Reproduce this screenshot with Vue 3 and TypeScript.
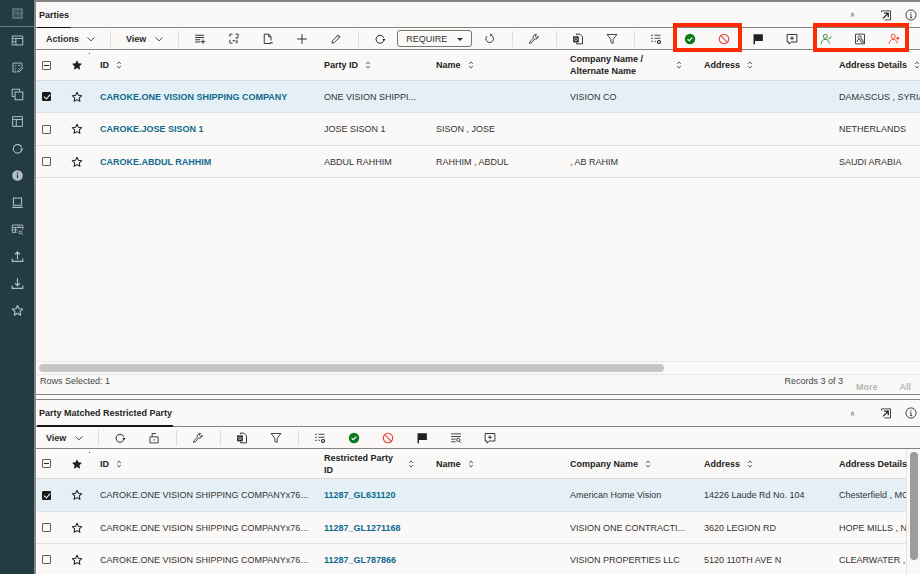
<script setup lang="ts">
type Cell = { text?: string; link?: boolean }
type Row = { selected: boolean; cells: Cell[] }
type Head = { label: string; sort?: boolean; wrap?: boolean }
type ToolItem = { icon?: string; sep?: boolean; require?: boolean }

const icons: Record<string, string> = {
  logo: '<rect x="1.5" y="1.5" width="13" height="13" fill="currentColor" opacity=".45"/><path d="M4 4h3v3H4zM9 4h3v1.5H9zM9 7h3M4 9h1.5v3H4zM7 9h1.5v3H7zM10 9h2v3h-2z" fill="none" stroke="#233c43" stroke-width=".9"/>',
  panels: '<path d="M1.5 2.5h13v11h-13zM1.5 5.5h13M6 5.5v8M1.5 9.5H6" fill="none" stroke="currentColor" stroke-width="1.2"/>',
  editdoc: '<path d="M13.5 7V2.5h-11v11H7M5 5.5h1.5M8.500 5.5H11M5 8.500h1.500M5 11h1M8.500 13.500l.4-2L13 7.500l1.500 1.500-4 4z" fill="none" stroke="currentColor" stroke-width="1.200"/>',
  copy: '<path d="M10.500 4V1.500h-9v9H4M5 5h9.500v9.500H5z" fill="none" stroke="currentColor" stroke-width="1.300"/>',
  layout: '<path d="M2 2h12v12H2zM2 5.500h12M6.500 5.500V14" fill="none" stroke="currentColor" stroke-width="1.200"/>',
  sync: '<path d="M13 6.500A5.300 5.300 0 1 0 13.300 9" fill="none" stroke="currentColor" stroke-width="1.300"/><path d="M11 8h4.500l-2.200 2.500z" fill="currentColor"/>',
  infofill: '<circle cx="8" cy="8" r="6.500" fill="currentColor"/><path d="M8 7v4.500M8 4.300v1.400" stroke="#233c43" stroke-width="1.600"/>',
  laptop: '<path d="M3 2.500h10v9H3zM1.500 14h13" fill="none" stroke="currentColor" stroke-width="1.300"/>',
  tablesearch: '<path d="M7 11.500H1.500v-9h13V8M1.500 5.500h13M1.500 8.500H8M5.500 5.500v6M10 2.500v3" fill="none" stroke="currentColor" stroke-width="1.100"/><circle cx="11.500" cy="11.500" r="1.800" fill="none" stroke="currentColor" stroke-width="1.100"/><path d="M13 13l1.500 1.500" stroke="currentColor" stroke-width="1.100"/>',
  upload: '<path d="M1.500 10.500v3.500h13v-3.500M8 11.500V2.500M4.800 5.500L8 2.300l3.200 3.200" fill="none" stroke="currentColor" stroke-width="1.400"/>',
  download: '<path d="M1.500 10.500v3.500h13v-3.500M8 1.500v9M4.800 7.500L8 10.700l3.200-3.200" fill="none" stroke="currentColor" stroke-width="1.400"/>',
  star: '<path d="M8 1.800l1.900 4 4.400.5-3.200 3 .8 4.400L8 11.500l-3.900 2.200.8-4.400-3.200-3 4.400-.5z" fill="none" stroke="currentColor" stroke-width="1.400" stroke-linejoin="round"/>',
  addrow: '<path d="M1.500 3h12M1.500 6h12M1.500 9h7M1.500 12h7" fill="none" stroke="currentColor" stroke-width="1.200"/><path d="M12 8.500v6M9 11.500h6" stroke="currentColor" stroke-width="1.200"/>',
  swap: '<path d="M6 1.500H2.500V5M10 1.500h3.500V5M2.500 9v4.500H6M10 6.500h3.500M13.500 6.500L12 5M10 10.500H6.500M6.500 10.500L8 9M12 9v4.500M12 13.500L10.500 12" fill="none" stroke="currentColor" stroke-width="1.200"/>',
  doc: '<path d="M12 14H3V1.500h6L12 5v5M9 1.500V5h3M10.500 13h4" fill="none" stroke="currentColor" stroke-width="1.200"/>',
  plus: '<path d="M8 1.500v13M1.500 8h13" stroke="currentColor" stroke-width="1.200"/>',
  pencil: '<path d="M2.500 13.500l.7-3L11 2.500l2.500 2.500-7.800 7.800z M9.800 3.800l2.400 2.400" fill="none" stroke="currentColor" stroke-width="1.100"/>',
  reload: '<path d="M10 3.300A5 5 0 1 1 4 4.200" fill="none" stroke="currentColor" stroke-width="1.200"/><path d="M8.500 .8v4l2.800-2z" fill="currentColor"/>',
  wrench: '<path d="M2 14l1-3 4.200-4.200A3.600 3.600 0 0 1 11.500 2L9.700 4l1.800 2 2.200-1.600a3.600 3.600 0 0 1-4.800 3.600L4.500 13z" fill="none" stroke="currentColor" stroke-width="1.100"/>',
  exportdoc: '<path d="M6 3V1.500h4.500L14 5v9.500H6V13" fill="none" stroke="currentColor" stroke-width="1.200"/><rect x="1.500" y="4.500" width="7.500" height="8" fill="currentColor"/><circle cx="5.200" cy="8.500" r="1.800" fill="none" stroke="#fbf9f8" stroke-width="1"/>',
  filter: '<path d="M1.500 2h13L9.500 8.500V14l-3-1.500v-4z" fill="none" stroke="currentColor" stroke-width="1.100"/>',
  listgear: '<path d="M1.500 3l1 1 1-1.800M1.500 7l1 1 1-1.800M1.500 11l1 1 1-1.800M6 3h8M6 7h8M6 11h2" fill="none" stroke="currentColor" stroke-width="1.100"/><circle cx="12" cy="12" r="2" fill="none" stroke="currentColor" stroke-width="1.500"/>',
  okfill: '<circle cx="8" cy="8" r="7" fill="#0b7a1d"/><path d="M4.800 8.300l2.200 2 4-4.200" fill="none" stroke="#fff" stroke-width="1.500"/>',
  ban: '<circle cx="8" cy="8" r="6.300" fill="none" stroke="#ee3a2c" stroke-width="1.400"/><path d="M3.600 3.600l8.800 8.800" stroke="#ee3a2c" stroke-width="1.400"/>',
  flag: '<path d="M2 1.500h12.500v9H4V15H2z" fill="currentColor"/>',
  comment: '<path d="M1.500 2h13v10H7l-3 2.800V12H1.500z M8 4.500v5M5.500 7h5" fill="none" stroke="currentColor" stroke-width="1.200"/>',
  userok: '<circle cx="7" cy="4.500" r="2.700" fill="none" stroke="#17852c" stroke-width="1.200"/><path d="M1.500 14.500c.3-4 2.300-6 5.500-6s5 1.700 5.500 5.500M11 6.500l1.500 1.500L15 4.500" fill="none" stroke="#17852c" stroke-width="1.200"/>',
  docsearch: '<path d="M2 1.500h12v13H2z" fill="none" stroke="currentColor" stroke-width="1.100"/><circle cx="7.500" cy="6" r="2.200" fill="none" stroke="currentColor" stroke-width="1.100"/><path d="M4 12c.3-2.500 1.500-3.500 3.500-3.500" fill="none" stroke="currentColor" stroke-width="1.100"/><circle cx="10.500" cy="10.500" r="1.700" fill="none" stroke="currentColor" stroke-width="1.100"/><path d="M12 12l2 2" stroke="currentColor" stroke-width="1.100"/>',
  userx: '<circle cx="7" cy="4.500" r="2.700" fill="none" stroke="#ee3a2c" stroke-width="1.200"/><path d="M1.500 14.500c.3-4 2.300-6 5.500-6s5 1.700 5.500 5.500" fill="none" stroke="#ee3a2c" stroke-width="1.200"/><circle cx="13" cy="7" r="1.800" fill="#ee3a2c"/>',
  listsearch: '<path d="M1.500 2.500h13M1.500 6h13M1.500 9.500h6M1.500 13h6" fill="none" stroke="currentColor" stroke-width="1.100"/><circle cx="11" cy="10.500" r="2.200" fill="none" stroke="currentColor" stroke-width="1.100"/><path d="M12.700 12.200l2 2" stroke="currentColor" stroke-width="1.100"/>',
  lockdoc: '<path d="M2.500 6.500h11v8h-11zM5.500 6.500V2h5M8 9.500v2" fill="none" stroke="currentColor" stroke-width="1.100"/>',
  collapse: '<path d="M5 8l3-2.500L11 8M5 11.500L8 9l3 2.500" fill="none" stroke="currentColor" stroke-width="1.200"/>',
  openout: '<path d="M6 2.500H2v2M14 2.500v12H6M6 2.500h8" fill="none" stroke="currentColor" stroke-width="1.100"/><path d="M4 12.500l7-7M5.500 5.500H11V11" fill="none" stroke="currentColor" stroke-width="1.700"/>',
  info: '<circle cx="8" cy="8" r="6.800" fill="none" stroke="currentColor" stroke-width="1.100"/><path d="M8 7v4.500M6.800 7H8M6.500 11.500h3M8 4.200v1.300" fill="none" stroke="currentColor" stroke-width="1.100"/>',
  chevron: '<path d="M2.500 5.500L8 11l5.500-5.500" fill="none" stroke="currentColor" stroke-width="1.400"/>',
  sort: '<path d="M5 6.500L8 3l3 3.500M5 9.500L8 13l3-3.500" fill="none" stroke="currentColor" stroke-width="1.200"/>',
  starfill: '<path d="M8 1.500l2 4.300 4.700.6-3.400 3.200.9 4.700L8 11.900l-4.200 2.400.9-4.700L1.300 6.400 6 5.800z" fill="currentColor"/>',
}

const sideIcons = ['panels', 'editdoc', 'copy', 'layout', 'sync', 'infofill', 'laptop', 'tablesearch', 'upload', 'download', 'star']

const topTools: ToolItem[] = [
  { icon: 'addrow' }, { icon: 'swap' }, { icon: 'doc' }, { icon: 'plus' }, { icon: 'pencil' }, { sep: true },
  { icon: 'sync' }, { require: true }, { icon: 'reload' }, { sep: true },
  { icon: 'wrench' }, { sep: true }, { icon: 'exportdoc' }, { icon: 'filter' }, { sep: true }, { icon: 'listgear' },
]
const bottomTools: ToolItem[] = [
  { icon: 'sync' }, { icon: 'lockdoc' }, { sep: true }, { icon: 'wrench' }, { sep: true },
  { icon: 'exportdoc' }, { icon: 'filter' }, { sep: true }, { icon: 'listgear' },
  { icon: 'okfill' }, { icon: 'ban' }, { icon: 'flag' }, { icon: 'listsearch' }, { icon: 'comment' },
]

const topHeads: Head[] = [
  { label: 'ID', sort: true }, { label: 'Party ID', sort: true }, { label: 'Name', sort: true },
  { label: 'Company Name / Alternate Name', sort: true, wrap: true }, { label: 'Address', sort: true }, { label: 'Address Details', sort: true },
]
const bottomHeads: Head[] = [
  { label: 'ID', sort: true }, { label: 'Restricted Party ID', sort: true, wrap: true }, { label: 'Name', sort: true },
  { label: 'Company Name', sort: true }, { label: 'Address', sort: true }, { label: 'Address Details' },
]

const topRows: Row[] = [
  { selected: true, cells: [{ text: 'CAROKE.ONE VISION SHIPPING COMPANY', link: true }, { text: 'ONE VISION SHIPPI...' }, {}, { text: 'VISION CO' }, {}, { text: 'DAMASCUS , SYRIA' }] },
  { selected: false, cells: [{ text: 'CAROKE.JOSE SISON 1', link: true }, { text: 'JOSE SISON 1' }, { text: 'SISON , JOSE' }, {}, {}, { text: 'NETHERLANDS' }] },
  { selected: false, cells: [{ text: 'CAROKE.ABDUL RAHHIM', link: true }, { text: 'ABDUL RAHHIM' }, { text: 'RAHHIM , ABDUL' }, { text: ', AB RAHIM' }, {}, { text: 'SAUDI ARABIA' }] },
]
const matchId = 'CAROKE.ONE VISION SHIPPING COMPANYx76...'
const bottomRows: Row[] = [
  { selected: true, cells: [{ text: matchId }, { text: '11287_GL631120', link: true }, {}, { text: 'American Home Vision' }, { text: '14226 Laude Rd No. 104' }, { text: 'Chesterfield , MO' }] },
  { selected: false, cells: [{ text: matchId }, { text: '11287_GL1271168', link: true }, {}, { text: 'VISION ONE CONTRACTI...' }, { text: '3620 LEGION RD' }, { text: 'HOPE MILLS , NC' }] },
  { selected: false, cells: [{ text: matchId }, { text: '11287_GL787866', link: true }, {}, { text: 'VISION PROPERTIES LLC' }, { text: '5120 110TH AVE N' }, { text: 'CLEARWATER , FL' }] },
]
</script>

<template>
  <div class="app">
    <aside class="sidebar">
      <div class="side-head">
        <svg class="side-ic" viewBox="0 0 16 16" v-html="icons.logo"></svg>
      </div>
      <div v-for="name in sideIcons" :key="name" class="side-item">
        <svg class="side-ic" viewBox="0 0 16 16" v-html="icons[name]"></svg>
      </div>
    </aside>

    <main class="main">
      <section class="panel panel-top">
        <header class="title-bar">
          <span class="tab">Parties</span>
          <div class="title-actions">
            <svg class="ic small" viewBox="0 0 16 16" v-html="icons.collapse"></svg>
            <svg class="ic" viewBox="0 0 16 16" v-html="icons.openout"></svg>
            <svg class="ic" viewBox="0 0 16 16" v-html="icons.info"></svg>
          </div>
        </header>

        <div class="toolbar">
          <button class="menu menu-actions">Actions <svg class="chev" viewBox="0 0 16 16" v-html="icons.chevron"></svg></button>
          <i class="sep"></i>
          <button class="menu menu-view">View <svg class="chev" viewBox="0 0 16 16" v-html="icons.chevron"></svg></button>
          <i class="sep"></i>
          <template v-for="(t, i) in topTools" :key="i">
            <i v-if="t.sep" class="sep"></i>
            <button v-else-if="t.require" class="require">REQUIRE <b class="caret"></b></button>
            <span v-else class="tool"><svg class="ic" viewBox="0 0 16 16" v-html="icons[t.icon!]"></svg></span>
          </template>
          <div class="marked marked-a">
            <span class="tool"><svg class="ic" viewBox="0 0 16 16" v-html="icons.okfill"></svg></span>
            <span class="tool"><svg class="ic" viewBox="0 0 16 16" v-html="icons.ban"></svg></span>
          </div>
          <span class="tool"><svg class="ic" viewBox="0 0 16 16" v-html="icons.flag"></svg></span>
          <span class="tool"><svg class="ic" viewBox="0 0 16 16" v-html="icons.comment"></svg></span>
          <div class="marked marked-b">
            <span class="tool"><svg class="ic" viewBox="0 0 16 16" v-html="icons.userok"></svg></span>
            <span class="tool"><svg class="ic" viewBox="0 0 16 16" v-html="icons.docsearch"></svg></span>
            <span class="tool"><svg class="ic" viewBox="0 0 16 16" v-html="icons.userx"></svg></span>
          </div>
        </div>

        <div class="table table-a">
          <div class="row head">
            <div class="cell cell-check"><span class="box minus"></span></div>
            <div class="cell cell-star dot"><svg class="ic" viewBox="0 0 16 16" v-html="icons.starfill"></svg></div>
            <div v-for="h in topHeads" :key="h.label" class="cell" :class="{ wrapped: h.wrap }">
              <span class="head-label">{{ h.label }}</span>
              <svg v-if="h.sort" class="sort" viewBox="0 0 16 16" v-html="icons.sort"></svg>
            </div>
          </div>
          <div v-for="(r, i) in topRows" :key="i" class="row" :class="{ selected: r.selected }">
            <div class="cell cell-check"><span class="box" :class="{ checked: r.selected }"></span></div>
            <div class="cell cell-star"><svg class="ic" viewBox="0 0 16 16" v-html="icons.star"></svg></div>
            <div v-for="(c, j) in r.cells" :key="j" class="cell" :class="{ link: c.link }">{{ c.text }}</div>
          </div>
        </div>

        <div class="hscroll"><div class="thumb"></div></div>
        <footer class="footer">
          <span>Rows Selected: 1</span>
          <span class="records">Records 3 of 3</span>
          <span class="pager more">More</span>
          <span class="pager all">All</span>
        </footer>
      </section>

      <section class="panel panel-bottom">
        <header class="title-bar">
          <span class="tab">Party Matched Restricted Party</span>
          <div class="title-actions">
            <svg class="ic small" viewBox="0 0 16 16" v-html="icons.collapse"></svg>
            <svg class="ic" viewBox="0 0 16 16" v-html="icons.openout"></svg>
            <svg class="ic" viewBox="0 0 16 16" v-html="icons.info"></svg>
          </div>
        </header>

        <div class="toolbar">
          <button class="menu menu-view-b">View <svg class="chev" viewBox="0 0 16 16" v-html="icons.chevron"></svg></button>
          <i class="sep"></i>
          <template v-for="(t, i) in bottomTools" :key="i">
            <i v-if="t.sep" class="sep"></i>
            <span v-else class="tool"><svg class="ic" viewBox="0 0 16 16" v-html="icons[t.icon!]"></svg></span>
          </template>
        </div>

        <div class="table table-b">
          <div class="row head">
            <div class="cell cell-check"><span class="box minus"></span></div>
            <div class="cell cell-star dot"><svg class="ic" viewBox="0 0 16 16" v-html="icons.starfill"></svg></div>
            <div v-for="h in bottomHeads" :key="h.label" class="cell" :class="{ wrapped: h.wrap }">
              <span class="head-label">{{ h.label }}</span>
              <svg v-if="h.sort" class="sort" viewBox="0 0 16 16" v-html="icons.sort"></svg>
            </div>
          </div>
          <div v-for="(r, i) in bottomRows" :key="i" class="row" :class="{ selected: r.selected }">
            <div class="cell cell-check"><span class="box" :class="{ checked: r.selected }"></span></div>
            <div class="cell cell-star"><svg class="ic" viewBox="0 0 16 16" v-html="icons.star"></svg></div>
            <div v-for="(c, j) in r.cells" :key="j" class="cell" :class="{ link: c.link }">{{ c.text }}</div>
          </div>
        </div>
        <div class="vscroll"></div>
      </section>
    </main>
  </div>
</template>

<style>
html,
body {
  margin: 0;
  height: 100%;
  overflow: hidden;
  background: #fbf9f8;
}
</style>

<style scoped>
.app {
  display: flex;
  width: 920px;
  height: 574px;
  overflow: hidden;
  font-family: "Liberation Sans", Arial, sans-serif;
  font-size: 9px;
  color: #333;
  background: #fbf9f8;
}

.sidebar {
  flex: none;
  width: 34px;
  background: #233c43;
  border-right: 2px solid #85878a;
  color: #b4bfc1;
}

.side-head {
  height: 27px;
  display: flex;
  align-items: center;
  justify-content: center;
  box-sizing: border-box;
  border-bottom: 1px solid #6d7f83;
}

.side-item {
  height: 27px;
  display: flex;
  align-items: center;
  justify-content: center;
}

.side-ic {
  width: 13px;
  height: 13px;
}

.main {
  flex: 1;
  min-width: 0;
  display: flex;
  flex-direction: column;
  border-top: 2px solid #84837f;
}

.panel-top {
  height: 393px;
  flex: none;
  box-sizing: border-box;
  display: flex;
  flex-direction: column;
  border-bottom: 1px solid #84837f;
}

.panel-bottom {
  flex: 1;
  min-height: 0;
  position: relative;
  overflow: hidden;
  margin-top: 4px;
  border-top: 1px solid #84837f;
}

.title-bar {
  flex: none;
  height: 26px;
  box-sizing: border-box;
  display: flex;
  align-items: stretch;
  justify-content: space-between;
  border-bottom: 1px solid #84837f;
}

.tab {
  margin-left: 1px;
  padding: 8px 2px 0;
  font-weight: 700;
  color: #222;
  border-bottom: 1px solid #161513;
  margin-bottom: -1px;
}

.panel-bottom .title-bar {
  height: 27px;
}

.panel-bottom .tab {
  border-bottom-width: 2px;
  padding-right: 1px;
}

.title-actions {
  display: flex;
  align-items: center;
  padding-right: 3px;
  color: #222;
}

.title-actions .ic {
  margin-left: 13px;
}

.title-actions .ic.small {
  width: 9px;
  height: 9px;
  margin-right: 10px;
}

.toolbar {
  flex: none;
  height: 22px;
  box-sizing: border-box;
  display: flex;
  align-items: center;
  border-bottom: 1px solid #84837f;
  color: #222;
}

.menu {
  display: flex;
  align-items: center;
  justify-content: space-between;
  height: 100%;
  border: 0;
  background: none;
  padding: 0;
  font: inherit;
  font-weight: 700;
  color: #2c2c2c;
}

.menu-actions {
  width: 50px;
  margin: 0 9px 0 10px;
}

.menu-view {
  width: 38px;
  margin: 0 9px 0 11px;
}

.menu-view-b {
  width: 38px;
  margin: 0 9px 0 10px;
}

.chev {
  width: 10px;
  height: 10px;
}

.sep {
  flex: none;
  width: 1px;
  height: 16px;
  background: #dfdedb;
  margin: 0 4px 0 5px;
}

.tool {
  flex: none;
  width: 34px;
  display: flex;
  align-items: center;
  justify-content: center;
}

.ic {
  width: 12px;
  height: 12px;
}

.require {
  flex: none;
  width: 75px;
  height: 17px;
  margin: 0 1px 0 0;
  padding: 0;
  border: 1px solid #77756f;
  border-radius: 3px;
  background: none;
  font: inherit;
  color: #333;
}

.caret {
  display: inline-block;
  margin-left: 7px;
  vertical-align: 1px;
  border: 3px solid transparent;
  border-top: 3px solid #333;
  border-bottom: 0;
}

.marked {
  position: relative;
  display: flex;
  flex: none;
  align-self: stretch;
}

.marked::after {
  content: "";
  position: absolute;
  top: -5px;
  bottom: -3px;
  border: 4px solid #ff2a00;
}

.marked-a::after {
  left: 0;
  right: -1px;
}

.marked-b::after {
  left: 4px;
  right: 2px;
}

.table {
  flex: 1;
  min-height: 0;
  overflow: hidden;
}

.row {
  display: grid;
  grid-template-columns: 28px 36px 224px 112px 134px 134px 135px 1fr;
  height: 32px;
  box-sizing: border-box;
  border-bottom: 1px solid #e4e3df;
}

.table-a .row:nth-child(3),
.table-b .row:nth-child(2) {
  height: 33px;
}

.row.selected {
  background: #e4f0f6;
}

.table .row.head {
  height: 31px;
  border-bottom-color: #dddcd8;
  font-weight: 700;
  color: #222;
}

.table-b .row.head {
  height: 30px;
}

.table-b .row {
  width: 871px;
  border-right: 1px solid #e4e3df;
}

.cell {
  display: flex;
  align-items: center;
  min-width: 0;
  white-space: nowrap;
  overflow: hidden;
}

.head .cell {
  overflow: visible;
}

.head-label {
  white-space: nowrap;
  line-height: 12px;
}

.wrapped {
  padding-right: 20px;
}

.wrapped .head-label {
  white-space: normal;
  max-width: 76px;
}

.wrapped .sort {
  margin-left: auto;
}

.link {
  color: #0f6a8e;
  font-weight: 700;
}

.sort {
  flex: none;
  width: 10px;
  height: 10px;
  margin-left: 5px;
  color: #333;
}

.cell-check {
  padding-left: 6px;
}

.cell-star {
  padding-left: 7px;
  color: #222;
  position: relative;
}

.dot::after {
  content: "";
  position: absolute;
  left: 25px;
  top: 3px;
  width: 1px;
  height: 1px;
  background: #555;
}

.box {
  width: 9px;
  height: 9px;
  box-sizing: border-box;
  border: 1px solid #5f5e5a;
  border-radius: 1px;
  position: relative;
  background: #fbf9f8;
}

.box.minus::after {
  content: "";
  position: absolute;
  left: 1px;
  right: 1px;
  top: 3px;
  height: 1px;
  background: #222;
}

.box.checked {
  background: #1a1816;
  border-color: #1a1816;
}

.box.checked::after {
  content: "";
  position: absolute;
  left: 2px;
  top: 0;
  width: 3px;
  height: 5px;
  border: solid #fff;
  border-width: 0 1px 1px 0;
  transform: rotate(40deg);
}

.hscroll {
  height: 14px;
  flex: none;
  display: flex;
  align-items: center;
  border-top: 1px solid #e8e7e4;
  border-bottom: 1px solid #e8e7e4;
  box-sizing: border-box;
  padding-left: 3px;
}

.thumb {
  width: 625px;
  height: 8px;
  border-radius: 4px;
  background: #c6c6c5;
}

.footer {
  flex: none;
  height: 19px;
  box-sizing: border-box;
  display: flex;
  padding: 1px 9px 0 4px;
  color: #444;
}

.records {
  margin-left: auto;
}

.pager {
  font-weight: 700;
  color: #b7b6b3;
  margin-top: 6px;
}

.more {
  margin-left: 13px;
}

.all {
  margin-left: 22px;
}

.vscroll {
  position: absolute;
  right: 2px;
  top: 52px;
  width: 8px;
  height: 108px;
  border-radius: 4px;
  background: #9c9c9c;
}
</style>
